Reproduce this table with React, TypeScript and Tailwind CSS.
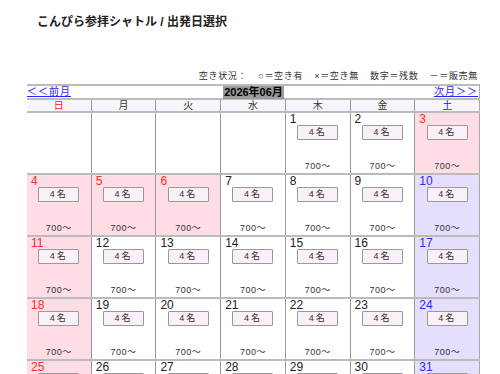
import React from "react";

type Day = { d: number; kind?: "sun" | "sat" };

const FONT = { fontFamily: '"Liberation Sans", "Noto Sans CJK JP", sans-serif' };

const WEEKS: (Day | null)[][] = [
  [null, null, null, null, { d: 1 }, { d: 2 }, { d: 3, kind: "sun" }],
  [{ d: 4, kind: "sun" }, { d: 5, kind: "sun" }, { d: 6, kind: "sun" }, { d: 7 }, { d: 8 }, { d: 9 }, { d: 10, kind: "sat" }],
  [{ d: 11, kind: "sun" }, { d: 12 }, { d: 13 }, { d: 14 }, { d: 15 }, { d: 16 }, { d: 17, kind: "sat" }],
  [{ d: 18, kind: "sun" }, { d: 19 }, { d: 20 }, { d: 21 }, { d: 22 }, { d: 23 }, { d: 24, kind: "sat" }],
  [{ d: 25, kind: "sun" }, { d: 26 }, { d: 27 }, { d: 28 }, { d: 29 }, { d: 30 }, { d: 31, kind: "sat" }],
];

const HEAD = [
  { t: "日", c: "text-[#ff2020]" },
  { t: "月", c: "text-[#333]" },
  { t: "火", c: "text-[#333]" },
  { t: "水", c: "text-[#333]" },
  { t: "木", c: "text-[#333]" },
  { t: "金", c: "text-[#333]" },
  { t: "土", c: "text-[#2020ff]" },
];

function Cell({ day, last }: { day: Day | null; last: boolean }) {
  const bg = day?.kind === "sun" ? "bg-[#fedde4]" : day?.kind === "sat" ? "bg-[#e5defd]" : "bg-white";
  const num = day?.kind === "sun" ? "text-[#ff2a2a]" : day?.kind === "sat" ? "text-[#2a2aff]" : "text-[#222]";
  return (
    <div className={`h-[60px] flex flex-col ${bg} ${last ? "border-r border-[#aaa]" : "border-r border-[#999]"}`}>
      {day && (
        <>
          <div className={`h-[12px] pl-[4px] text-[12px] leading-[12px] ${num}`}>{day.d}</div>
          <div className="flex justify-center">
            <div className="w-[41px] h-[15px] border border-[#999] bg-[#faf0f8] rounded-[1px] flex items-center justify-center text-[9px] text-[#333] tracking-[2px]">
              4名
            </div>
          </div>
          <div className="mt-[22px] text-center text-[9px] leading-[9px] text-[#333] tracking-[0.5px]">700～</div>
        </>
      )}
    </div>
  );
}

export default function App() {
  return (
    <div className="w-[500px] h-[374px] overflow-hidden bg-white pt-[15px]" style={FONT}>
      {/* title */}
      <div className="pl-[37px] text-[12px] leading-[14px] font-bold text-[#222]">
        こんぴら参拝シャトル / 出発日選択
      </div>

      {/* legend */}
      <div className="mt-[42px] pr-[22px] flex justify-end gap-[11px] text-[9px] leading-[11px] text-[#333] tracking-[0.7px]">
        <span>空き状況：</span>
        <span>○＝空き有</span>
        <span>×＝空き無</span>
        <span>数字＝残数</span>
        <span>－＝販売無</span>
      </div>

      {/* calendar */}
      <div className="ml-[27px] w-[453px] mt-[2px]">
        <div className="border-t-2 border-[#bbb] h-[14px] flex items-center justify-between border-r border-r-[#aaa]">
          <a className="text-[10px] leading-[10px] text-[#2424ff] underline tracking-[1px]">＜＜前月</a>
          <span className="text-[11px] leading-[11px] font-bold text-black bg-[#9b9b9b] px-[1px] py-[1px] translate-x-[1px]">2026年06月</span>
          <a className="text-[10px] leading-[10px] text-[#2424ff] underline tracking-[1px] pr-[1px]">次月＞＞</a>
        </div>
        <div className="grid grid-cols-7 border-t-2 border-b-2 border-[#bbb] bg-[#f8f6fd]">
          {HEAD.map((h, i) => (
            <div key={h.t} className={`h-[11px] text-center text-[10px] leading-[11px] ${h.c} border-r ${i === 6 ? "border-[#aaa]" : "border-[#999]"}`}>
              {h.t}
            </div>
          ))}
        </div>
        {WEEKS.map((w, wi) => (
          <div key={wi} className="grid grid-cols-7 border-b-2 border-[#bbb]">
            {w.map((d, i) => (
              <Cell key={i} day={d} last={i === 6} />
            ))}
          </div>
        ))}
      </div>
    </div>
  );
}
